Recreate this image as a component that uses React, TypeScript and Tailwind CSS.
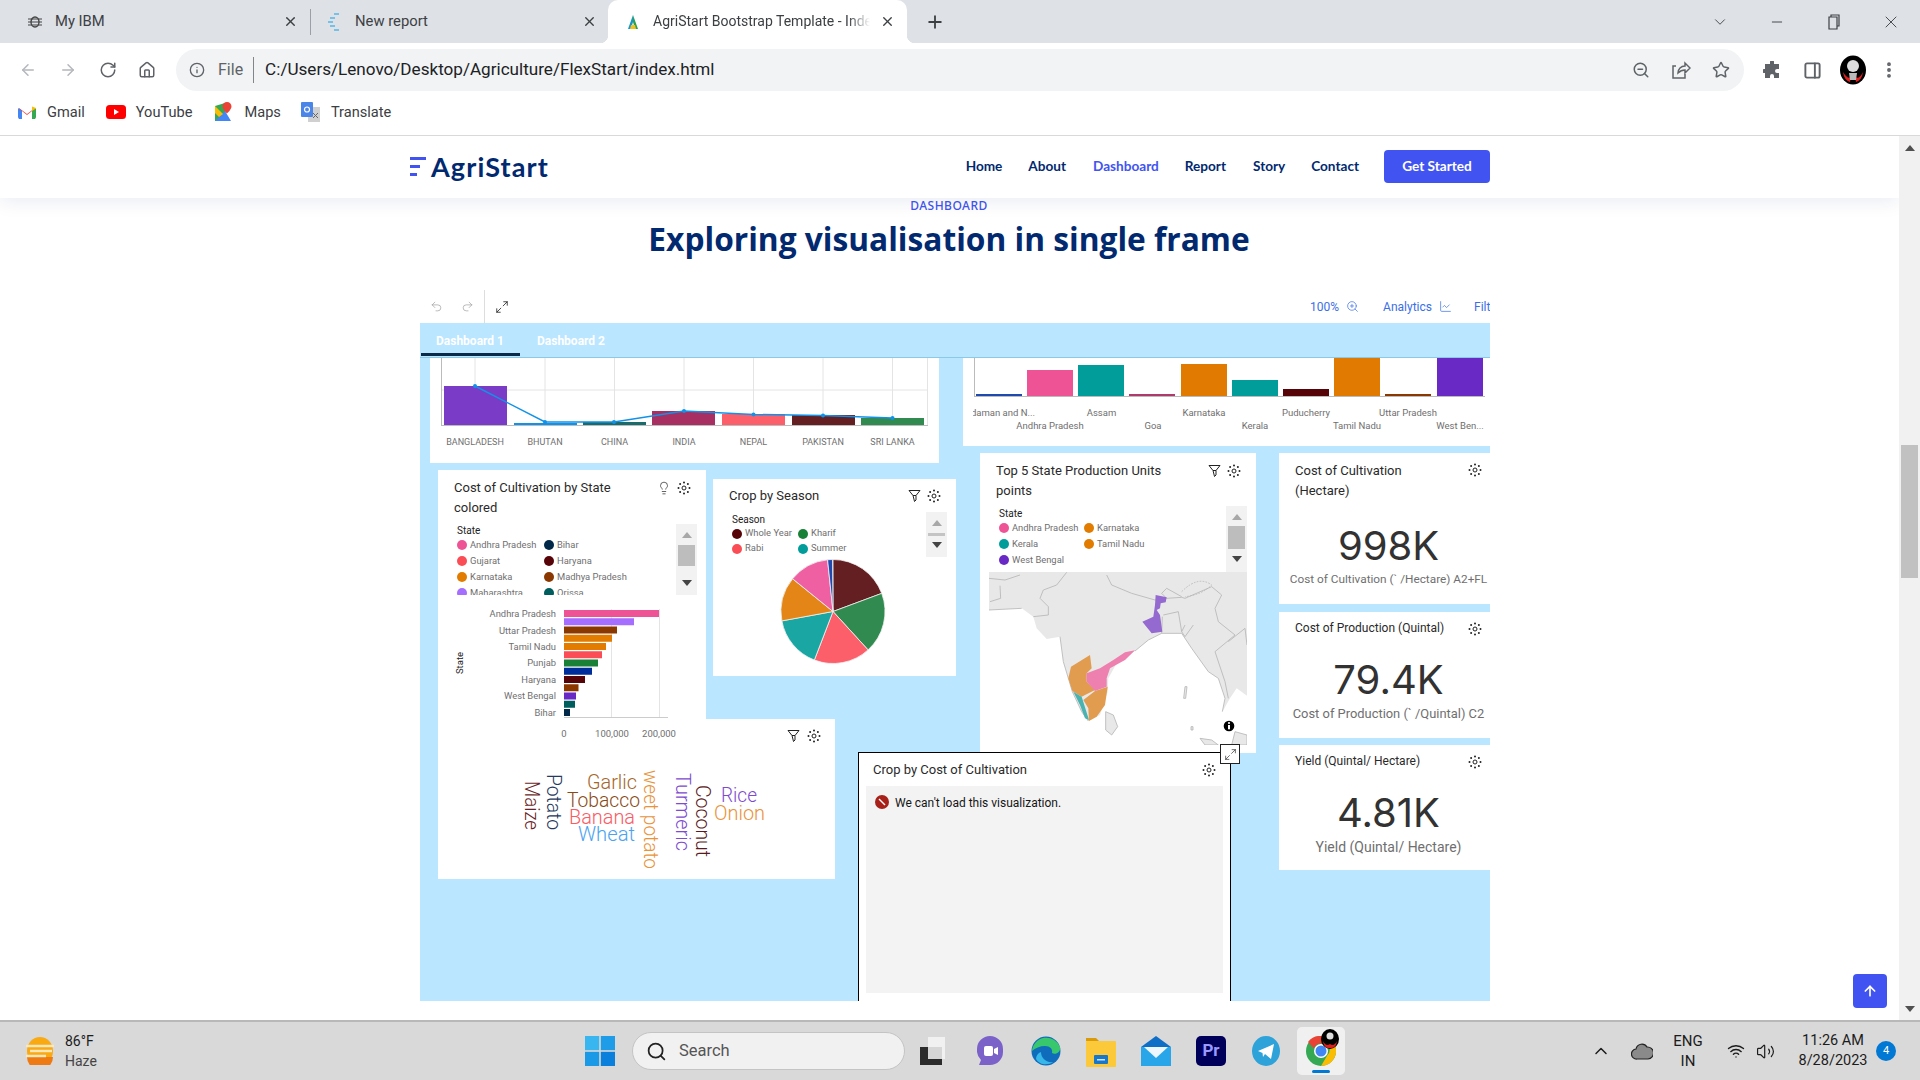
import {
  ArrowLeft,
  ArrowRight,
  ArrowUp,
  ChevronDown,
  ChevronUp,
  Home,
  Info,
  Lightbulb,
  LineChart,
  Maximize2,
  Minus,
  MoreVertical,
  PanelRight,
  Plus,
  Redo2,
  RotateCw,
  Search,
  Star,
  Undo2,
  Volume2,
  Wifi,
  X,
  ZoomIn,
  ZoomOut,
} from "lucide-react";

const plex = "font-['Roboto',sans-serif]";

function Gear() {
  const dots = [0, 45, 90, 135, 180, 225, 270, 315];
  return (
    <svg width="14" height="14" viewBox="0 0 14 14" className="shrink-0">
      <circle cx="7" cy="7" r="2" fill="none" stroke="#222" strokeWidth="1" />
      {dots.map((d) => (
        <circle
          key={d}
          cx={7 + 5.5 * Math.cos((d * Math.PI) / 180)}
          cy={7 + 5.5 * Math.sin((d * Math.PI) / 180)}
          r="1"
          fill="#222"
        />
      ))}
    </svg>
  );
}

function Funnel() {
  return (
    <svg width="13" height="14" viewBox="0 0 13 14" className="shrink-0">
      <path d="M1 1.5h11L8 6.5v0H5ZM5 6.5 6.5 12.5 8 11V6.5" fill="none" stroke="#222" strokeWidth="1" />
    </svg>
  );
}

function ScrollBox({ thumb, up, down }: { thumb: string; up: string; down: string }) {
  return (
    <div className="flex w-[21px] shrink-0 flex-col items-center bg-[#f2f2f2] py-[8px]">
      <div className={`h-0 w-0 border-x-[5px] border-b-[6px] border-x-transparent border-b-[#a8a8a8] ${up}`} />
      <div className={thumb} />
      <div className={`h-0 w-0 border-x-[5px] border-t-[6px] border-x-transparent border-t-[#444] ${down}`} />
    </div>
  );
}

type LegendItem = { label: string; dot: string };

function Legend({ title, items, grid, row, head }: { title: string; items: LegendItem[]; grid: string; row: string; head: string }) {
  return (
    <div className="min-w-0 flex-1 overflow-hidden">
      <div className={`flex items-center text-[10px] text-[#222] ${head}`}>{title}</div>
      <div className={`grid ${grid}`}>
        {items.map((it) => (
          <div key={it.label} className={`flex items-center gap-[3px] whitespace-nowrap text-[9.4px] text-[#6f6f6f] ${row}`}>
            <span className={`h-[10px] w-[10px] shrink-0 rounded-full ${it.dot}`} />
            {it.label}
          </div>
        ))}
      </div>
    </div>
  );
}

const stateLegend: LegendItem[] = [
  { label: "Andhra Pradesh", dot: "bg-[#ee5396]" },
  { label: "Bihar", dot: "bg-[#012749]" },
  { label: "Gujarat", dot: "bg-[#fa4d56]" },
  { label: "Haryana", dot: "bg-[#570408]" },
  { label: "Karnataka", dot: "bg-[#e27c00]" },
  { label: "Madhya Pradesh", dot: "bg-[#8a3800]" },
  { label: "Maharashtra", dot: "bg-[#a56eff]" },
  { label: "Orissa", dot: "bg-[#005d5d]" },
];
const seasonLegend: LegendItem[] = [
  { label: "Whole Year", dot: "bg-[#570408]" },
  { label: "Kharif", dot: "bg-[#198038]" },
  { label: "Rabi", dot: "bg-[#fa4d56]" },
  { label: "Summer", dot: "bg-[#009d9a]" },
];
const topLegend: LegendItem[] = [
  { label: "Andhra Pradesh", dot: "bg-[#ee5396]" },
  { label: "Karnataka", dot: "bg-[#e27c00]" },
  { label: "Kerala", dot: "bg-[#009d9a]" },
  { label: "Tamil Nadu", dot: "bg-[#e27c00]" },
  { label: "West Bengal", dot: "bg-[#6929c4]" },
];

function CountryChart() {
  const bars = [
    { x: 444, top: 386, c: "#7a3cc6" },
    { x: 514, top: 423, c: "#1192e8" },
    { x: 583, top: 422, c: "#1a6b6b" },
    { x: 652, top: 411, c: "#a82f62" },
    { x: 722, top: 414, c: "#fc5f69" },
    { x: 792, top: 415, c: "#641f22" },
    { x: 861, top: 418, c: "#318a4f" },
  ];
  const ticks = [
    { x: 475, l: "BANGLADESH" },
    { x: 545, l: "BHUTAN" },
    { x: 614.5, l: "CHINA" },
    { x: 684, l: "INDIA" },
    { x: 753.5, l: "NEPAL" },
    { x: 823, l: "PAKISTAN" },
    { x: 892.5, l: "SRI LANKA" },
  ];
  return (
    <svg viewBox="430 358 509 105" className="block h-full w-full">
      <line x1="441" y1="390" x2="928" y2="390" stroke="#e4e4e4" />
      <line x1="441.5" y1="358" x2="441.5" y2="425" stroke="#bbb" />
      <line x1="927.5" y1="358" x2="927.5" y2="425" stroke="#e4e4e4" />
      {ticks.map((t) => (
        <line key={t.x} x1={t.x} y1="358" x2={t.x} y2="425" stroke="#e4e4e4" />
      ))}
      {bars.map((b) => (
        <rect key={b.x} x={b.x} y={b.top} width="63" height={425 - b.top} fill={b.c} />
      ))}
      <line x1="441" y1="425.5" x2="928" y2="425.5" stroke="#bbb" />
      <polyline points="475,386 545,422 614,422 684,411 753.5,414.5 823,415.5 892.5,418" fill="none" stroke="#1192e8" strokeWidth="1.5" />
      {[[475, 386], [545, 422], [614, 422], [684, 411], [753.5, 414.5], [823, 415.5], [892.5, 418]].map(([x, y]) => (
        <circle key={x} cx={x} cy={y} r="2" fill="#1192e8" />
      ))}
      {ticks.map((t) => (
        <text key={t.l} x={t.x} y="445" textAnchor="middle" fontSize="9" fill="#6f6f6f">
          {t.l}
        </text>
      ))}
    </svg>
  );
}

function RegionChart() {
  const bars = [
    { x: 976, top: 394, c: "#1f49ae" },
    { x: 1027, top: 370, c: "#ee5396" },
    { x: 1078, top: 365, c: "#009d9a" },
    { x: 1129, top: 394, c: "#b03a6c" },
    { x: 1181, top: 364, c: "#e07a00" },
    { x: 1232, top: 380, c: "#009d9a" },
    { x: 1283, top: 389, c: "#570408" },
    { x: 1334, top: 358, c: "#e07a00" },
    { x: 1385, top: 394, c: "#8a3800" },
    { x: 1437, top: 358, c: "#6929c4" },
  ];
  const labels = [
    { x: 1101.5, y: 416, l: "Assam" },
    { x: 1204, y: 416, l: "Karnataka" },
    { x: 1306, y: 416, l: "Puducherry" },
    { x: 1408, y: 416, l: "Uttar Pradesh" },
    { x: 1050, y: 429, l: "Andhra Pradesh" },
    { x: 1153, y: 429, l: "Goa" },
    { x: 1255, y: 429, l: "Kerala" },
    { x: 1357, y: 429, l: "Tamil Nadu" },
    { x: 1460, y: 429, l: "West Ben..." },
  ];
  return (
    <svg viewBox="963 358 527 88" className="block h-full w-full">
      <line x1="974.5" y1="358" x2="974.5" y2="396" stroke="#bbb" />
      {bars.map((b) => (
        <rect key={b.x} x={b.x} y={b.top} width="46" height={396 - b.top} fill={b.c} />
      ))}
      <line x1="974" y1="396.5" x2="1485" y2="396.5" stroke="#bbb" />
      <text x="1035" y="416" textAnchor="end" fontSize="9.5" fill="#6f6f6f">
        Andaman and N...
      </text>
      <rect x="963" y="405" width="10" height="14" fill="#fff" />
      {labels.map((t) => (
        <text key={t.l} x={t.x} y={t.y} textAnchor="middle" fontSize="9.5" fill="#6f6f6f">
          {t.l}
        </text>
      ))}
    </svg>
  );
}

function StateBars() {
  const bars = [
    { w: 95, c: "#ee5396" },
    { w: 70, c: "#a56eff" },
    { w: 53, c: "#8a3800" },
    { w: 48, c: "#e27c00" },
    { w: 42, c: "#e27c00" },
    { w: 38, c: "#fa4d56" },
    { w: 34, c: "#198038" },
    { w: 28, c: "#002d9c" },
    { w: 21, c: "#570408" },
    { w: 14.5, c: "#8a3800" },
    { w: 12, c: "#6929c4" },
    { w: 11, c: "#005d5d" },
    { w: 6, c: "#012749" },
  ];
  const labels = [
    { y: 613, l: "Andhra Pradesh" },
    { y: 630, l: "Uttar Pradesh" },
    { y: 646, l: "Tamil Nadu" },
    { y: 662, l: "Punjab" },
    { y: 679, l: "Haryana" },
    { y: 695, l: "West Bengal" },
    { y: 712, l: "Bihar" },
  ];
  return (
    <svg viewBox="438 595 268 145" className="block h-[145px] w-[268px]">
      <line x1="611.5" y1="609" x2="611.5" y2="717" stroke="#e4e4e4" />
      <line x1="659.5" y1="609" x2="659.5" y2="717" stroke="#e4e4e4" />
      {bars.map((b, i) => (
        <rect key={i} x="564" y={610 + i * 8.25} width={b.w} height="7" fill={b.c} />
      ))}
      <line x1="564" y1="717.5" x2="668" y2="717.5" stroke="#ccc" />
      {labels.map((t) => (
        <text key={t.l} x="556" y={t.y + 3.5} textAnchor="end" fontSize="9.4" fill="#6f6f6f">
          {t.l}
        </text>
      ))}
      <text x="564" y="736.5" textAnchor="middle" fontSize="9.5" fill="#6f6f6f">0</text>
      <text x="612" y="736.5" textAnchor="middle" fontSize="9.5" fill="#6f6f6f">100,000</text>
      <text x="659" y="736.5" textAnchor="middle" fontSize="9.5" fill="#6f6f6f">200,000</text>
      <text transform="translate(463 663) rotate(-90)" textAnchor="middle" fontSize="9.5" fill="#222">State</text>
    </svg>
  );
}

function Pie() {
  const cx = 833;
  const cy = 611.5;
  const r = 52;
  const parts = [
    { from: 0, to: 69.6, c: "#641f22" },
    { from: 69.6, to: 137.6, c: "#318a4f" },
    { from: 137.6, to: 201, c: "#fc5f69" },
    { from: 201, to: 259.6, c: "#1aa7a3" },
    { from: 259.6, to: 309, c: "#e38517" },
    { from: 309, to: 354, c: "#ef60a3" },
    { from: 354, to: 359.5, c: "#1f49ae" },
  ];
  const pt = (a: number) => {
    const rad = (a * Math.PI) / 180;
    return `${cx + r * Math.sin(rad)} ${cy - r * Math.cos(rad)}`;
  };
  return (
    <svg viewBox="713 557 243 119" className="block h-[119px] w-[243px]">
      {parts.map((p) => (
        <path
          key={p.from}
          d={`M${cx} ${cy}L${pt(p.from)}A${r} ${r} 0 0 1 ${pt(p.to)}Z`}
          fill={p.c}
          stroke="#f2f2f2"
          strokeWidth="0.8"
        />
      ))}
    </svg>
  );
}

function WordCloud() {
  return (
    <svg viewBox="438 719 397 160" className="block h-full w-full">
      <text x="587" y="789" fontSize="21" fontWeight="300" fill="#a5662a" textLength="50" lengthAdjust="spacingAndGlyphs">Garlic</text>
      <text x="567" y="807" fontSize="21" fontWeight="300" fill="#8a4a12" textLength="73" lengthAdjust="spacingAndGlyphs">Tobacco</text>
      <text x="569" y="824" fontSize="21" fontWeight="300" fill="#fa5b64" textLength="66" lengthAdjust="spacingAndGlyphs">Banana</text>
      <text x="578" y="841" fontSize="21" fontWeight="300" fill="#4aa3f0" textLength="57" lengthAdjust="spacingAndGlyphs">Wheat</text>
      <text x="721" y="802" fontSize="21" fontWeight="300" fill="#7d4ad0" textLength="36" lengthAdjust="spacingAndGlyphs">Rice</text>
      <text x="714" y="820" fontSize="21" fontWeight="300" fill="#e8933a" textLength="51" lengthAdjust="spacingAndGlyphs">Onion</text>
      <text transform="translate(525 781) rotate(90)" fontSize="21" fontWeight="300" fill="#6a1f2a" textLength="49" lengthAdjust="spacingAndGlyphs">Maize</text>
      <text transform="translate(547 774) rotate(90)" fontSize="21" fontWeight="300" fill="#26395e" textLength="56" lengthAdjust="spacingAndGlyphs">Potato</text>
      <text transform="translate(644 770) rotate(90)" fontSize="21" fontWeight="300" fill="#e8933a" textLength="99" lengthAdjust="spacingAndGlyphs">weet potato</text>
      <text transform="translate(676 773) rotate(90)" fontSize="21" fontWeight="300" fill="#7d4ad0" textLength="78" lengthAdjust="spacingAndGlyphs">Turmeric</text>
      <text transform="translate(696 785) rotate(90)" fontSize="21" fontWeight="300" fill="#5a1a22" textLength="72" lengthAdjust="spacingAndGlyphs">Coconut</text>
    </svg>
  );
}

function IndiaMap() {
  const border = "#b4b4b4";
  return (
    <svg viewBox="12 21 774 519" className="block h-[173px] w-[258px]">
      <path
        d="M12 21H786V392L755 370 735 400 712 440 720 400 700 340 670 320 620 250 590 205 530 205 490 225 450 258 395 295 370 340 368 380 345 450 310 468 290 440 262 380 250 340 235 290 225 215 185 222 155 190 145 155 110 130 12 135Z"
        fill="#e8e8e8"
      />
      <path d="M362 440 385 450 398 485 380 510 362 495ZM645 520 680 525 700 540 660 540ZM750 500 786 510 786 540 740 540ZM600 365 606 365 602 400 596 400ZM618 485 624 485 624 495 618 495Z" fill="#e8e8e8" stroke={border} strokeWidth="2.4" />
      <path
        d="M12 40 60 45 105 30M45 62 47 100 15 110M245 22 215 60 175 75 165 100 190 125 190 150 145 155M365 30 380 60 440 85 510 105M545 100 530 85 545 70 590 95M510 105 545 100 590 97M535 150 580 140 590 200M530 205 532 155M590 97 600 100 680 65 710 90 690 130 700 170 750 210 690 260 720 350 730 400M730 230 780 190 786 240M110 130 12 135M225 215 235 290 250 340 262 380 290 440 310 468M450 258 490 225 530 205 590 205 620 250 670 320 700 340 720 400 712 440M600 180 590 200 600 215 625 180"
        fill="none"
        stroke={border}
        strokeWidth="2.4"
      />
      <path d="M590 80Q640 30 680 60 650 90 600 95" fill="none" stroke={border} strokeWidth="2.4" strokeDasharray="5 4" />
      <path d="M315 270 320 310 305 325 305 350 330 375 300 390 290 395 262 378 250 340 258 305Z" fill="#e19c50" />
      <path d="M330 378 368 365 360 420 335 455 312 468 310 430 295 405Z" fill="#e19c50" />
      <path d="M265 380 290 395 312 465 300 460 285 420Z" fill="#4ab3b0" />
      <path d="M305 325 345 310 385 285 420 262 450 256 420 285 375 310 365 340 365 365 330 378 305 350Z" fill="#ed80ae" />
      <path d="M512 90 545 97 542 112 527 115 525 130 515 135 525 150 532 200 500 205 472 170 505 155 510 120Z" fill="#9469d0" />
      <circle cx="732" cy="483" r="16" fill="#000" />
      <rect x="729" y="480" width="6" height="13" fill="#fff" />
      <circle cx="732" cy="474" r="3.2" fill="#fff" />
    </svg>
  );
}

function KpiTile({ title, value, sub, subSize, tall, place }: { title: string[]; value: string; sub: string; subSize: string; tall?: boolean; place: string }) {
  return (
    <div className={`absolute bg-white ${place}`}>
      <div className="flex items-start justify-between pl-[16px] pr-[8px] pt-[8px]">
        <div className={tall ? "text-[13px] leading-[20px] text-[#2a2a2a]" : "text-[12px] leading-[16px] text-[#2a2a2a]"}>
          {title.map((t) => (
            <div key={t}>{t}</div>
          ))}
        </div>
        <div className="mt-[2px]">
          <Gear />
        </div>
      </div>
      <div className={`pl-[8px] text-center font-['Inter',sans-serif] text-[40px] leading-[46px] text-[#323232] ${tall ? "mt-[22px]" : "mt-[21px]"}`}>{value}</div>
      <div className={`whitespace-nowrap pl-[8px] text-center leading-[16px] text-[#6f6f6f] ${subSize} ${tall ? "mt-[2px]" : "mt-[3px]"}`}>{sub}</div>
    </div>
  );
}

function TabStrip() {
  const tab = "relative flex h-full items-center text-[14.8px] text-[#3c4043]";
  return (
    <div className="flex h-[43px] shrink-0 items-center bg-[#dee1e6] pl-[8px] font-['Roboto',sans-serif]">
      <div className={`${tab} w-[302px] pl-[19px] pr-[12px]`}>
        <svg width="16" height="14" viewBox="0 0 16 14" className="mr-[12px] shrink-0">
          <ellipse cx="8" cy="7" rx="4" ry="5" fill="none" stroke="#444" strokeWidth="1.4" />
          <path d="M1 4h14M1 7h14M1 10h14" stroke="#444" strokeWidth="1.2" />
        </svg>
        <span className="flex-1">My IBM</span>
        <X size={15} strokeWidth={2.2} />
      </div>
      <div className="h-[26px] w-px bg-[#9aa0a6]" />
      <div className={`${tab} w-[297px] pl-[15px] pr-[11px]`}>
        <svg width="14" height="18" viewBox="0 0 14 18" className="mr-[15px] shrink-0">
          <path d="M8 1h5M4 5h5M2 9h5M4 13h5M8 17h5" stroke="#55b6e6" strokeWidth="1.6" />
        </svg>
        <span className="flex-1">New report</span>
        <X size={15} strokeWidth={2.2} />
      </div>
      <div className={`${tab} w-[299px] rounded-t-[10px] bg-white pl-[17px] pr-[12px] !text-[14px]`}>
        <span className="absolute -left-[8px] bottom-0 h-[8px] w-[8px] bg-[radial-gradient(circle_at_0_0,transparent_8px,white_8.5px)]" />
        <span className="absolute -right-[8px] bottom-0 h-[8px] w-[8px] bg-[radial-gradient(circle_at_100%_0,transparent_8px,white_8.5px)]" />
        <svg width="16" height="16" viewBox="0 0 16 16" className="mr-[12px] shrink-0">
          <path d="M8 1 3 15h3L8 8Z" fill="#1595d3" />
          <path d="M8 1l5 14h-3L8 8Z" fill="#2aa14b" />
          <path d="M6 11h4l1 4H5Z" fill="#f2c21a" />
        </svg>
        <span className="w-[217px] shrink-0 overflow-hidden whitespace-nowrap [mask-image:linear-gradient(to_right,black_90%,transparent)]">AgriStart Bootstrap Template - Index</span>
        <X size={15} strokeWidth={2.2} className="ml-auto" />
      </div>
      <Plus size={20} strokeWidth={2.2} className="ml-[18px] text-[#3c4043]" />
      <div className="ml-auto flex items-center text-[#3c4043]">
        <ChevronDown size={18} strokeWidth={1.2} />
        <Minus size={16} strokeWidth={1.4} className="ml-[40px]" />
        <svg width="14" height="16" viewBox="0 0 14 16" className="ml-[42px]">
          <path d="M4 3V1h8v11h-2M2 3h8v12H2Z" fill="none" stroke="#3c4043" strokeWidth="1.2" />
        </svg>
        <X size={20} strokeWidth={1.1} className="ml-[40px] mr-[19px]" />
      </div>
    </div>
  );
}

function Toolbar() {
  return (
    <div className="flex h-[48px] shrink-0 items-center bg-white pl-[19px] pt-[6px] font-['Roboto',sans-serif]">
      <ArrowLeft size={18} className="text-[#b4b7bb]" />
      <ArrowRight size={18} className="ml-[22px] text-[#b4b7bb]" />
      <RotateCw size={18} className="ml-[22px] text-[#5f6368]" />
      <Home size={18} className="ml-[21px] text-[#5f6368]" />
      <div className="ml-[20px] flex h-[42px] w-[1568px] items-center rounded-full bg-[#f1f3f4] pl-[13px] pr-[12px]">
        <Info size={16} className="text-[#5f6368]" />
        <span className="ml-[13px] text-[16px] text-[#5f6368]">File</span>
        <span className="ml-[10px] h-[26px] w-px bg-[#80868b]" />
        <span className="ml-[11px] text-[17.1px] text-[#202124]">C:/Users/Lenovo/Desktop/Agriculture/FlexStart/index.html</span>
        <ZoomOut size={18} className="ml-auto text-[#5f6368]" />
        <svg width="20" height="20" viewBox="0 0 20 20" className="ml-[21px]" fill="none" stroke="#5f6368" strokeWidth="1.5">
          <path d="M5 6H2v12h12v-4" />
          <path d="M7 13c0-4 3-7 7-7V3l5 5-5 5v-3c-3 0-5 1-7 3Z" />
        </svg>
        <Star size={18} className="ml-[21px] mr-[2px] text-[#5f6368]" />
      </div>
      <svg width="18" height="18" viewBox="0 0 18 18" className="ml-[19px]">
        <path d="M7 1a2 2 0 0 1 4 0v2h5v5h-2a2 2 0 0 0 0 4h2v5h-5v-2a2 2 0 0 0-4 0v2H2v-5H1a2 2 0 0 1 0-4h1V3h5Z" fill="#5f6368" />
      </svg>
      <PanelRight size={19} strokeWidth={2.4} className="ml-[22px] text-[#5f6368]" />
      <svg width="28" height="30" viewBox="0 0 28 30" className="ml-[17px]">
        <ellipse cx="14" cy="15" rx="13" ry="14.5" fill="#000" />
        <path d="M4 17q5 8 8 5l-1 5q-6-2-7-10ZM24 17q-4 8-8 5l1 5q6-2 7-10Z" fill="#e01e1e" />
        <circle cx="14" cy="11" r="6" fill="#ddd" />
        <path d="M10 18h8l-1 7h-6Z" fill="#bbb" />
      </svg>
      <MoreVertical size={20} strokeWidth={2.6} className="ml-[12px] text-[#5f6368]" />
    </div>
  );
}

function Bookmarks() {
  const item = "flex items-center text-[14.6px] text-[#3c4043]";
  return (
    <div className="flex h-[45px] shrink-0 items-center border-b border-[#d9d9d9] bg-white pb-[1px] pl-[18px] font-['Roboto',sans-serif]">
      <div className={item}>
        <svg width="18" height="14" viewBox="0 0 18 14" className="mr-[11px]">
          <path d="M1 14V3l8 6 8-6v11h-3V6L9 10 4 6v8Z" fill="#ea4335" />
          <path d="M0 3v9a2 2 0 0 0 2 2h2V6Z" fill="#4285f4" />
          <path d="M18 3v9a2 2 0 0 1-2 2h-2V6Z" fill="#34a853" />
          <path d="M14 6V1.5l4 1.5v.5Z" fill="#fbbc04" />
        </svg>
        Gmail
      </div>
      <div className={`${item} ml-[21px]`}>
        <svg width="20" height="14" viewBox="0 0 20 14" className="mr-[10px]">
          <rect width="20" height="14" rx="3.5" fill="#f00" />
          <path d="M8 4l5 3-5 3Z" fill="#fff" />
        </svg>
        YouTube
      </div>
      <div className={`${item} ml-[22px]`}>
        <svg width="18" height="20" viewBox="0 0 18 20" className="mr-[12px]">
          <path d="M1 4 11 1v18L1 19Z" fill="#34a853" />
          <path d="M1 19 11 9l6 10Z" fill="#4285f4" />
          <path d="M1 4l8 8-4 3-4-4Z" fill="#fbbc04" />
          <path d="M13 0a4.5 4.5 0 0 1 4.5 4.5c0 3-4.5 7-4.5 7s-4.5-4-4.5-7A4.5 4.5 0 0 1 13 0Z" fill="#ea4335" />
        </svg>
        Maps
      </div>
      <div className={`${item} ml-[20px]`}>
        <svg width="20" height="20" viewBox="0 0 20 20" className="mr-[10px]">
          <rect x="7" y="5" width="12" height="15" fill="#d0d0d0" />
          <rect x="0" y="0" width="12" height="15" rx="1" fill="#4a86e8" />
          <circle cx="6" cy="7.5" r="2.5" fill="none" stroke="#fff" strokeWidth="1.2" />
          <path d="M12 11l5 5M17 11l-5 5" stroke="#666" strokeWidth="1" />
        </svg>
        Translate
      </div>
    </div>
  );
}

function Navbar() {
  const link = "text-[13.6px] font-bold text-[#012970]";
  return (
    <div className="relative z-10 flex h-[62px] shrink-0 items-center bg-white pb-[2px] pl-[410px] font-['Lato',sans-serif] shadow-[0_2px_20px_rgba(1,41,112,0.1)]">
      <div className="flex w-[1080px] items-center">
        <div className="flex flex-col gap-[5px]">
          <span className="h-[3px] w-[16px] bg-[#4154f1]" />
          <span className="h-[3px] w-[10px] bg-[#4154f1]" />
          <span className="h-[3px] w-[7px] bg-[#4154f1]" />
        </div>
        <span className="ml-[5px] text-[27px] font-bold leading-none tracking-[1.1px] text-[#012970]">AgriStart</span>
        <div className="ml-auto flex items-center">
          <span className={`${link} mr-[26px]`}>Home</span>
          <span className={`${link} mr-[27px]`}>About</span>
          <span className={`${link} mr-[26px] !text-[#4154f1]`}>Dashboard</span>
          <span className={`${link} mr-[27px]`}>Report</span>
          <span className={`${link} mr-[26px]`}>Story</span>
          <span className={`${link} mr-[25px]`}>Contact</span>
          <span className="flex h-[33px] w-[106px] items-center justify-center rounded-[4px] bg-[#4154f1] text-[13.6px] font-bold text-white">Get Started</span>
        </div>
      </div>
    </div>
  );
}

function Canvas() {
  return (
    <div className={`relative h-[643px] overflow-hidden bg-[#bae6ff] ${plex}`}>
      <div className="absolute left-[10px] top-0 h-[105px] w-[509px] bg-white">
        <CountryChart />
      </div>
      <div className="absolute left-[543px] top-0 h-[88px] w-[527px] bg-white">
        <RegionChart />
      </div>

      <div className="absolute left-[18px] top-[361px] h-[160px] w-[397px] bg-white">
        <WordCloud />
        <div className="absolute right-[14px] top-[10px] flex items-center gap-[7px]">
          <Funnel />
          <Gear />
        </div>
      </div>

      <div className="absolute left-[18px] top-[112px] h-[270px] w-[268px] bg-white">
        <div className="flex justify-between pl-[16px] pr-[15px] pt-[8px]">
          <div className="text-[13px] leading-[20px] text-[#2a2a2a]">
            <div>Cost of Cultivation by State</div>
            <div>colored</div>
          </div>
          <div className="flex h-[20px] items-center gap-[6px]">
            <Lightbulb size={14} strokeWidth={1.2} className="text-[#222]" />
            <Gear />
          </div>
        </div>
        <div className="mt-[6px] flex h-[71px] pl-[19px] pr-[9px]">
          <Legend title="State" items={stateLegend} grid="grid-cols-[87px_1fr]" row="h-[16px]" head="h-[13px]" />
          <ScrollBox thumb="mt-[7px] h-[21px] w-[17px] bg-[#bdbdbd]" up="" down="mt-[14px]" />
        </div>
        <StateBars />
      </div>

      <div className="absolute left-[293px] top-[121px] h-[197px] w-[243px] bg-white">
        <div className="flex justify-between pl-[16px] pr-[15px] pt-[7px]">
          <div className="text-[13px] leading-[20px] text-[#2a2a2a]">Crop by Season</div>
          <div className="flex h-[20px] items-center gap-[6px]">
            <Funnel />
            <Gear />
          </div>
        </div>
        <div className="mt-[6px] flex h-[45px] pl-[19px] pr-[9px]">
          <Legend title="Season" items={seasonLegend} grid="grid-cols-[66px_1fr]" row="h-[15px]" head="h-[14px]" />
          <ScrollBox thumb="mt-[7px] h-[3px] w-[17px] bg-[#c4c4c4]" up="" down="mt-[6px]" />
        </div>
        <Pie />
      </div>

      <div className="absolute left-[560px] top-[95px] h-[300px] w-[276px] bg-white">
        <div className="flex justify-between pl-[16px] pr-[15px] pt-[8px]">
          <div className="text-[13px] leading-[20px] text-[#2a2a2a]">
            <div>Top 5 State Production Units</div>
            <div>points</div>
          </div>
          <div className="flex h-[20px] items-center gap-[6px]">
            <Funnel />
            <Gear />
          </div>
        </div>
        <div className="mt-[5px] flex h-[66px] pl-[19px] pr-[9px]">
          <Legend title="State" items={topLegend} grid="grid-cols-[85px_1fr]" row="h-[16px]" head="h-[14px]" />
          <ScrollBox thumb="mt-[6px] h-[23px] w-[17px] bg-[#bdbdbd]" up="" down="mt-[7px]" />
        </div>
        <div className="pl-[9px]">
          <IndiaMap />
        </div>
      </div>

      <KpiTile place="left-[859px] top-[95px] h-[151px] w-[211px]" tall title={["Cost of Cultivation", "(Hectare)"]} value="998K" sub="Cost of Cultivation (` /Hectare) A2+FL" subSize="text-[11.8px]" />
      <KpiTile place="left-[859px] top-[254px] h-[126px] w-[211px]" title={["Cost of Production (Quintal)"]} value="79.4K" sub="Cost of Production (` /Quintal) C2" subSize="text-[12.9px]" />
      <KpiTile place="left-[859px] top-[387px] h-[125px] w-[211px]" title={["Yield (Quintal/ Hectare)"]} value="4.81K" sub="Yield (Quintal/ Hectare)" subSize="text-[14px]" />

      <div className="absolute left-[438px] top-[394px] h-[260px] w-[373px] border-x border-t border-black bg-white">
        <div className="flex h-[33px] items-center justify-between pl-[14px] pr-[14px]">
          <span className="text-[13px] text-[#2a2a2a]">Crop by Cost of Cultivation</span>
          <Gear />
        </div>
        <div className="mx-[7px] flex h-[207px] items-start bg-[#f3f3f3] px-[9px] pt-[8px]">
          <svg width="14" height="14" viewBox="0 0 14 14" className="mt-[1px] shrink-0">
            <circle cx="7" cy="7" r="7" fill="#a8201a" />
            <path d="M4 4l6 6" stroke="#fff" strokeWidth="1.4" />
          </svg>
          <span className="ml-[6px] text-[12px] text-[#161616]">We can't load this visualization.</span>
        </div>
      </div>
      <div className="absolute left-[800px] top-[386px] flex h-[20px] w-[20px] items-center justify-center border border-[#222] bg-white">
        <Maximize2 size={13} strokeWidth={1.2} className="text-[#222]" />
      </div>
    </div>
  );
}

function Dashboard() {
  return (
    <div className="ml-[420px] w-[1070px]">
      <div className={`flex h-[33px] items-center overflow-hidden bg-white text-[12px] text-[#3b6fe8] ${plex}`}>
        <Undo2 size={13} strokeWidth={1.2} className="ml-[10px] text-[#999]" />
        <Redo2 size={13} strokeWidth={1.2} className="ml-[18px] text-[#999]" />
        <span className="ml-[10px] h-full w-px bg-[#ddd]" />
        <Maximize2 size={14} strokeWidth={1.4} className="ml-[10px] text-[#222]" />
        <span className="ml-auto">100%</span>
        <ZoomIn size={13} strokeWidth={1.3} className="ml-[7px]" />
        <span className="ml-[24px]">Analytics</span>
        <LineChart size={13} strokeWidth={1.3} className="ml-[7px]" />
        <span className="ml-[22px] w-[16px] overflow-hidden whitespace-nowrap">Filters</span>
      </div>
      <div className={`flex h-[35px] items-center border-b border-[#8cc8e8] bg-[#bae6ff] pt-[2px] text-[12px] font-bold text-white ${plex}`}>
        <div className="relative flex h-full w-[100px] items-center pl-[16px]">
          Dashboard 1
          <span className="absolute bottom-[1px] left-[1px] h-[3px] w-[99px] bg-[#0b2a4a]" />
        </div>
        <div className="ml-[17px]">Dashboard 2</div>
      </div>
      <Canvas />
    </div>
  );
}

function PageScrollbar() {
  return (
    <div className="flex w-[21px] shrink-0 flex-col items-center bg-[#f1f1f1] pb-[8px] pt-[9px]">
      <div className="h-0 w-0 border-x-[5px] border-b-[6px] border-x-transparent border-b-[#505050]" />
      <div className="mt-[294px] h-[133px] w-[17px] bg-[#c1c1c1]" />
      <div className="mt-auto h-0 w-0 border-x-[5px] border-t-[6px] border-x-transparent border-t-[#505050]" />
    </div>
  );
}

function Taskbar() {
  return (
    <div className="relative flex h-[60px] shrink-0 items-center border-t-2 border-[#b8b8b8] bg-[#d9d9d9] font-['Roboto',sans-serif] text-[#1c1c1c]">
      <div className="ml-[26px] flex w-[559px] items-center">
        <svg width="28" height="28" viewBox="0 0 28 28">
          <ellipse cx="14" cy="14" rx="13" ry="14" fill="#f9a912" />
          <path d="M1 20a13 13 0 0 0 26 0Z" fill="#ed7a12" />
          <path d="M0 9h28M4 14h22M0 19h20" stroke="#fbe7b8" strokeWidth="2.4" />
        </svg>
        <div className="ml-[11px] text-[14px] leading-[20px]">
          <div>86°F</div>
          <div className="text-[#444]">Haze</div>
        </div>
      </div>
      <svg width="30" height="30" viewBox="0 0 30 30">
        <rect width="14.2" height="14.2" fill="#39b5ef" />
        <rect x="15.8" width="14.2" height="14.2" fill="#1e9ce8" />
        <rect y="15.8" width="14.2" height="14.2" fill="#1a9ae6" />
        <rect x="15.8" y="15.8" width="14.2" height="14.2" fill="#0a7fdc" />
      </svg>
      <div className="ml-[17px] flex h-[38px] w-[273px] items-center rounded-full border border-[#c4c4c4] bg-[#f1f1f1] pl-[13px]">
        <Search size={21} strokeWidth={2} className="text-[#222]" />
        <span className="ml-[12px] text-[16.5px] text-[#555]">Search</span>
      </div>
      <svg width="25" height="28" viewBox="0 0 25 28" className="ml-[15px]">
        <rect x="0" y="10" width="22" height="18" fill="#2b2b2b" />
        <rect x="8" y="0" width="17" height="22" fill="#f4f4f4" opacity="0.85" />
      </svg>
      <svg width="28" height="30" viewBox="0 0 28 30" className="ml-[31px]">
        <path d="M14 0a13 13 0 0 1 13 13v3a13 13 0 0 1-13 13H3l2-5A13 13 0 0 1 1 16v-3A13 13 0 0 1 14 0Z" fill="#7b62c9" />
        <rect x="8" y="10" width="9" height="10" rx="2" fill="#fff" />
        <path d="M18 13l4-2v8l-4-2Z" fill="#fff" />
      </svg>
      <svg width="30" height="30" viewBox="0 0 30 30" className="ml-[27px]">
        <circle cx="15" cy="15" r="14.5" fill="#0f6cbd" />
        <path d="M1 15A14.5 14.5 0 0 1 29 11c1 6-5 8-8 6 1-4-2-7-7-7S4 12 1 15Z" fill="#38c76d" />
        <path d="M10 16c0 6 5 11 12 10 -4 3-13 4-17-3 0-3 2-6 5-7Z" fill="#37b6e9" />
      </svg>
      <svg width="30" height="32" viewBox="0 0 30 32" className="ml-[25px]">
        <path d="M0 3h10l3 3h-13Z" fill="#d99a0b" />
        <rect y="6" width="30" height="26" rx="1" fill="#fcc93a" />
        <rect x="8" y="20" width="14" height="9" rx="1" fill="#1877c9" />
        <rect x="11" y="24" width="8" height="1.5" fill="#cfe4f7" />
      </svg>
      <svg width="30" height="30" viewBox="0 0 30 30" className="ml-[25px]">
        <path d="M15 0 30 11v19H0V11Z" fill="#0f6fc6" />
        <path d="M0 11h30v19H0Z" fill="#29a6ea" />
        <path d="M3 11h24L15 22Z" fill="#eef7fd" />
      </svg>
      <div className="ml-[25px] flex h-[30px] w-[30px] items-center justify-center rounded-[5px] bg-[#00005b] text-[17px] font-bold text-[#9999ff]">Pr</div>
      <svg width="28" height="30" viewBox="0 0 28 30" className="ml-[26px]">
        <ellipse cx="14" cy="15" rx="14" ry="15" fill="#2ea3d9" />
        <path d="M6 15 22 8 19 23 13 18 11 21 10.500 17Z" fill="#fff" />
      </svg>
      <div className="relative ml-[17px] flex h-[48px] w-[48px] items-center justify-center rounded-[5px] bg-[#f0f0f0]">
        <svg width="30" height="30" viewBox="0 0 30 30">
          <circle cx="15" cy="15" r="15" fill="#34a853" />
          <path d="M15 0a15 15 0 0 1 13 7.500H15a7.500 7.500 0 0 0-7 5L2 6A15 15 0 0 1 15 0Z" fill="#ea4335" />
          <path d="M28 7.500A15 15 0 0 1 15 30l6.500-11a7.500 7.500 0 0 0-1-11.500Z" fill="#fbbc04" />
          <circle cx="15" cy="15" r="7" fill="#fff" />
          <circle cx="15" cy="15" r="5.500" fill="#4285f4" />
        </svg>
        <svg width="18" height="20" viewBox="0 0 18 20" className="absolute right-[6px] top-[2px]">
          <ellipse cx="9" cy="10" rx="9" ry="10" fill="#000" />
          <path d="M2 12q3 6 7 3 4 3 7-3-1 8-7 7-6 1-7-7Z" fill="#e01e1e" />
          <circle cx="9" cy="7" r="3.500" fill="#ddd" />
        </svg>
        <span className="absolute bottom-[2px] left-[15px] h-[3px] w-[18px] rounded-full bg-[#0078d4]" />
      </div>
      <ChevronUp size={20} strokeWidth={1.8} className="ml-[246px]" />
      <svg width="22" height="20" viewBox="0 0 22 20" className="ml-[20px]">
        <path d="M6 18a5 5 0 0 1-1-10 6 6 0 0 1 11-2 6 6 0 0 1 1 12Z" fill="#8a8a8a" stroke="#222" strokeWidth="1.2" />
      </svg>
      <div className="ml-[19px] w-[32px] text-center text-[15px] leading-[20px]">
        <div>ENG</div>
        <div>IN</div>
      </div>
      <Wifi size={18} strokeWidth={1.8} className="ml-[23px]" />
      <Volume2 size={19} strokeWidth={1.5} className="ml-[11px]" />
      <div className="ml-[23px] w-[70px] text-center text-[14.5px] leading-[20px]">
        <div className="whitespace-nowrap">11:26 AM</div>
        <div>8/28/2023</div>
      </div>
      <span className="ml-[8px] flex h-[20px] w-[20px] items-center justify-center rounded-full bg-[#0078d4] text-[11px] text-white">4</span>
    </div>
  );
}

export default function App() {
  return (
    <div className="flex h-[1080px] w-[1920px] flex-col overflow-hidden bg-white">
      <TabStrip />
      <Toolbar />
      <Bookmarks />
      <div className="relative flex min-h-0 flex-1">
        <div className="min-w-0 flex-1 overflow-hidden">
          <Navbar />
          <div className="ml-[8px] flex h-[16px] w-[1882px] items-center justify-center font-['Noto_Sans',sans-serif] text-[12px] font-medium tracking-[0.5px] text-[#4154f1]">DASHBOARD</div>
          <h2 className="mt-[3px] flex h-[44px] w-[1898px] items-center justify-center font-['Open_Sans',sans-serif] text-[31.7px] font-bold text-[#012970]">Exploring visualisation in single frame</h2>
          <div className="h-[29px]" />
          <Dashboard />
        </div>
        <PageScrollbar />
        <div className="absolute bottom-[12px] right-[33px] flex h-[34px] w-[34px] items-center justify-center rounded-[4px] bg-[#4154f1]">
          <ArrowUp size={16} strokeWidth={2.5} className="text-white" />
        </div>
      </div>
      <Taskbar />
    </div>
  );
}
